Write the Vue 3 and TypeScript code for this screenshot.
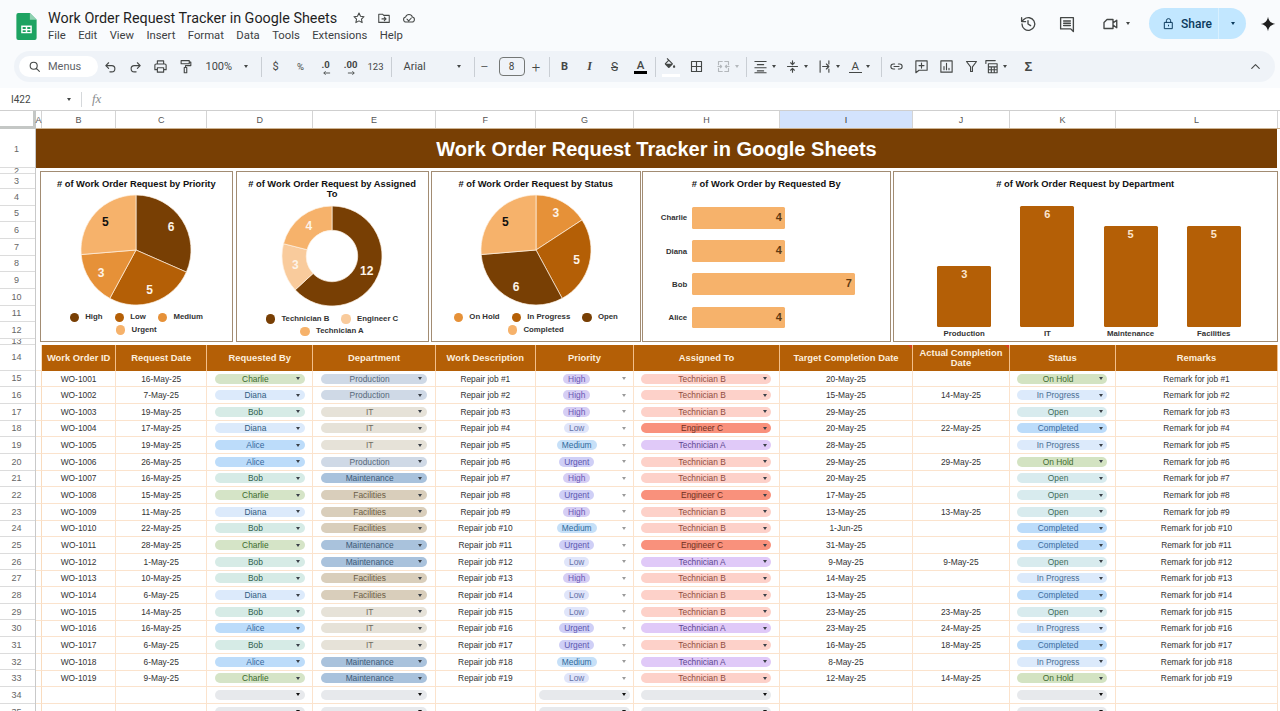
<script setup lang="ts">
interface Slice { d: string; color: string; x: number; y: number; v: number; tc: string }
interface Tool { kind: 'sep' | 'tb' | 'box'; cls?: string; d?: string; text?: string; tcls?: string; caret?: boolean; arrow?: string }

function slices(vals: number[], colors: string[], tcs: string[], r: number, inner = 0): Slice[] {
  const total = vals.reduce((a, b) => a + b, 0)
  const c = 57
  const pt = (rad: number, a: number) => `${(c + rad * Math.sin(a)).toFixed(2)} ${(c - rad * Math.cos(a)).toFixed(2)}`
  let acc = 0
  return vals.map((v, i) => {
    const a0 = (acc / total) * 2 * Math.PI
    acc += v
    const a1 = (acc / total) * 2 * Math.PI
    const large = a1 - a0 > Math.PI ? 1 : 0
    const d = inner
      ? `M${pt(r, a0)}A${r} ${r} 0 ${large} 1 ${pt(r, a1)}L${pt(inner, a1)}A${inner} ${inner} 0 ${large} 0 ${pt(inner, a0)}Z`
      : `M${c} ${c}L${pt(r, a0)}A${r} ${r} 0 ${large} 1 ${pt(r, a1)}Z`
    const mid = (a0 + a1) / 2
    const lr = inner ? (r + inner) / 2 : r * 0.76
    return { d, color: colors[i], tc: tcs[i], v, x: c + lr * Math.sin(mid), y: c - lr * Math.cos(mid) }
  })
}

const D3 = '#783f04', D2 = '#b45f06', D1 = '#e69138', L1 = '#f6b26b', L2 = '#f9cb9c'
const W = '#fdf3e8', K = '#111111'

const pies = [
  { title: '# of Work Order Request by Priority', cls: 'c1', sl: slices([6, 5, 3, 5], [D3, D2, D1, L1], [W, W, W, K], 55),
    legend: [['High', D3], ['Low', D2], ['Medium', D1], ['Urgent', L1]] },
  { title: '# of Work Order Request by Assigned To', cls: 'c2', sl: slices([12, 3, 4], [D3, L2, L1], [W, W, W], 50, 25.7),
    legend: [['Technician B', D3], ['Engineer C', L2], ['Technician A', L1]] },
  { title: '# of Work Order Request by Status', cls: 'c3', sl: slices([3, 5, 6, 5], [D1, D2, D3, L1], [W, W, W, K], 55),
    legend: [['On Hold', D1], ['In Progress', D2], ['Open', D3], ['Completed', L1]] }
]

const hbars = [['Charlie', 4], ['Diana', 4], ['Bob', 7], ['Alice', 4]] as [string, number][]
const vbars = [['Production', 3], ['IT', 6], ['Maintenance', 5], ['Facilities', 5]] as [string, number][]

const columns = ['A', 'B', 'C', 'D', 'E', 'F', 'G', 'H', 'I', 'J', 'K', 'L']
const headers = ['Work Order ID', 'Request Date', 'Requested By', 'Department', 'Work Description', 'Priority', 'Assigned To', 'Target Completion Date', 'Actual Completion Date', 'Status', 'Remarks']

const TB = 'Technician B', TA = 'Technician A', EC = 'Engineer C'
const raw: string[][] = [
  ['16-May-25', 'Charlie', 'Production', 'High', TB, '20-May-25', '', 'On Hold'],
  ['7-May-25', 'Diana', 'Production', 'High', TB, '15-May-25', '14-May-25', 'In Progress'],
  ['19-May-25', 'Bob', 'IT', 'High', TB, '29-May-25', '', 'Open'],
  ['17-May-25', 'Diana', 'IT', 'Low', EC, '20-May-25', '22-May-25', 'Completed'],
  ['19-May-25', 'Alice', 'IT', 'Medium', TA, '28-May-25', '', 'In Progress'],
  ['26-May-25', 'Alice', 'Production', 'Urgent', TB, '29-May-25', '29-May-25', 'On Hold'],
  ['16-May-25', 'Bob', 'Maintenance', 'High', TB, '20-May-25', '', 'Open'],
  ['15-May-25', 'Charlie', 'Facilities', 'Urgent', EC, '17-May-25', '', 'Open'],
  ['11-May-25', 'Diana', 'Facilities', 'High', TB, '13-May-25', '13-May-25', 'Open'],
  ['22-May-25', 'Bob', 'Facilities', 'Medium', TB, '1-Jun-25', '', 'Completed'],
  ['28-May-25', 'Charlie', 'Maintenance', 'Urgent', EC, '31-May-25', '', 'Completed'],
  ['1-May-25', 'Bob', 'Maintenance', 'Low', TA, '9-May-25', '9-May-25', 'Open'],
  ['10-May-25', 'Bob', 'Facilities', 'High', TB, '14-May-25', '', 'In Progress'],
  ['6-May-25', 'Diana', 'Facilities', 'Low', TB, '13-May-25', '', 'Completed'],
  ['14-May-25', 'Bob', 'IT', 'Low', TB, '23-May-25', '23-May-25', 'Open'],
  ['16-May-25', 'Alice', 'IT', 'Urgent', TA, '23-May-25', '24-May-25', 'In Progress'],
  ['6-May-25', 'Bob', 'IT', 'Urgent', TB, '16-May-25', '18-May-25', 'Completed'],
  ['6-May-25', 'Alice', 'Maintenance', 'Medium', TA, '8-May-25', '', 'In Progress'],
  ['9-May-25', 'Charlie', 'Maintenance', 'Low', TB, '12-May-25', '14-May-25', 'On Hold']
]
const rows = raw.map((r, i) => {
  const n = i + 1
  return { id: `WO-${1000 + n}`, date: r[0], by: r[1], dept: r[2], job: `Repair job #${n}`, pri: r[3], who: r[4], target: r[5], actual: r[6], status: r[7], remark: `Remark for job #${n}` }
})
const tone = (s: string) => 'p-' + s.toLowerCase().replace(/\s+/g, '-')

const rowLabels: [number, string][] = [[1, 'r1'], [2, 'r2'], [3, 'r3'], [4, ''], [5, ''], [6, ''], [7, ''], [8, ''], [9, ''], [10, ''], [11, ''], [12, ''], [13, 'r2'], [14, 'r14']]
for (let n = 15; n <= 35; n++) rowLabels.push([n, ''])

const P = {
  undo: 'M9 15 4.5 10.500 9 6M4.500 10.500H14a5 5 0 0 1 0 10h-3',
  redo: 'M15 15l4.500-4.500L15 6M19.500 10.500H10a5 5 0 0 0 0 10h3',
  print: 'M7 8V3h10v5M7 17H3v-7a2 2 0 0 1 2-2h14a2 2 0 0 1 2 2v7h-4M7 14h10v7H7z',
  paint: 'M5 2.500h13v5H5zM18 5h2.500v5.500H12v3M10 13.500h4V22h-4z',
  fill: 'M16.560 8.940 7.620 0 6.210 1.410l2.380 2.380-5.150 5.150c-.59.59-.59 1.540 0 2.120l5.500 5.500c.29.29.68.44 1.060.44s.77-.15 1.060-.44l5.500-5.500c.59-.58.59-1.530 0-2.120zM5.210 10 10 5.210 14.790 10H5.210zM19 11.500s-2 2.170-2 3.500c0 1.100.9 2 2 2s2-.9 2-2c0-1.330-2-3.500-2-3.500z',
  borders: 'M4 4h16v16H4zM12 4v16M4 12h16',
  merge: 'M4 9V4h6M14 4h6v5M4 15v5h6M14 20h6v-5M9 12H3M15 12h6M7 10l2 2-2 2M17 10l-2 2 2 2',
  align: 'M3 4h18M7 9h10M3 14h18M7 19h10M3 22h18',
  valign: 'M4 12h16M12 3v6M9 6l3 3 3-3M12 21v-6M9 18l3-3 3 3',
  wrap: 'M5 3v18M19 3v5M19 16v5M9 12h10M15 8l4 4-4 4',
  link: 'M9 8H7a4 4 0 0 0 0 8h2M15 8h2a4 4 0 0 1 0 8h-2M8 12h8',
  comment: 'M3 3h18v15H8l-5 4zM12 6.500v8M8 10.500h8',
  chart: 'M3 3h18v18H3zM8 17v-5M12 17V7M16 17v-2',
  filter: 'M4 4h16l-6.500 8.500V20h-3v-7.500z',
  table: 'M3 7V2.500h15M7 7.500h14V22H7zM7 12.500h14M7 17.200h14M11.700 12.500V22M16.400 12.500V22',
  up: 'M6 15l6-6 6 6',
  search: 'M10.500 4a6.500 6.500 0 1 0 0 13 6.500 6.500 0 0 0 0-13zM15.500 15.500 21 21',
  star: 'M12 3.500l2.600 5.600 6 .7-4.400 4.100 1.200 6-5.400-3-5.400 3 1.200-6-4.400-4.100 6-.7z',
  folder: 'M3 5.500h6.500l2 2H21v12H3zM8.500 13.500h7M12.500 10.500l3 3-3 3',
  cloud: 'M7 19a4.500 4.500 0 0 1-.7-8.900 6 6 0 0 1 11.400 0A4.500 4.500 0 0 1 17 19zM8.500 14l3 3 4.500-5',
  history: 'M4 12a8.500 8.500 0 1 0 2.800-6.300L3.800 8.500M3.500 3.500v5.300h5.300M12 7.500V12l3.500 2.200',
  thread: 'M3.500 3.500h17V22l-3.500-3.500H3.500zM7.500 8h9M7.500 11h9M7.500 14h9',
  video: 'M8 6h8v12H4V10zM16 10.500l5-3.500v10l-5-3.500z',
  lock: 'M8 10V7a4 4 0 0 1 8 0v3M5 10h14v11.500H5zM12 15v1.500',
  spark: 'M12 1c.9 6.300 4.700 10.100 11 11-6.300.9-10.100 4.700-11 11-.9-6.300-4.700-10.100-11-11 6.300-.9 10.100-4.700 11-11z'
}

const tools: Tool[] = [
  { kind: 'tb', d: P.undo }, { kind: 'tb', d: P.redo }, { kind: 'tb', d: P.print }, { kind: 'tb', d: P.paint },
  { kind: 'tb', cls: 'zoom', text: '100%', caret: true },
  { kind: 'sep', cls: 's1' },
  { kind: 'tb', text: '$', tcls: 'sym' }, { kind: 'tb', text: '%', tcls: 'sym small' },
  { kind: 'tb', text: '.0', tcls: 'sym tiny', arrow: 'M9 2H2M4 0 2 2l2 2' }, { kind: 'tb', text: '.00', tcls: 'sym tiny', arrow: 'M1 2h7M6 0l2 2-2 2' },
  { kind: 'tb', text: '123', tcls: 'sym small' },
  { kind: 'sep', cls: 's2' },
  { kind: 'tb', cls: 'font', text: 'Arial', caret: true },
  { kind: 'sep', cls: 's3' },
  { kind: 'tb', cls: 'w20', text: '−', tcls: 'pm' }, { kind: 'box', text: '8' }, { kind: 'tb', cls: 'w20', text: '+', tcls: 'pm' },
  { kind: 'sep', cls: 's4' },
  { kind: 'tb', text: 'B', tcls: 'fb' }, { kind: 'tb', text: 'I', tcls: 'fi' }, { kind: 'tb', text: 'S', tcls: 'fs' }, { kind: 'tb', text: 'A', tcls: 'fa' },
  { kind: 'sep', cls: 's5' },
  { kind: 'tb', cls: 'fillb', d: P.fill }, { kind: 'tb', cls: 'ml', d: P.borders },
  { kind: 'tb', cls: 'w36 dim', d: P.merge, caret: true },
  { kind: 'sep', cls: 's6' },
  { kind: 'tb', cls: 'w32', d: P.align, caret: true }, { kind: 'tb', cls: 'w32', d: P.valign, caret: true }, { kind: 'tb', cls: 'w32', d: P.wrap, caret: true },
  { kind: 'tb', cls: 'w32', text: 'A', tcls: 'ra', caret: true },
  { kind: 'sep', cls: 's7' },
  { kind: 'tb', d: P.link }, { kind: 'tb', d: P.comment }, { kind: 'tb', d: P.chart }, { kind: 'tb', d: P.filter },
  { kind: 'tb', cls: 'w32 wt', d: P.table, caret: true }, { kind: 'tb', text: 'Σ', tcls: 'sigma' }
]
const menus = ['File', 'Edit', 'View', 'Insert', 'Format', 'Data', 'Tools', 'Extensions', 'Help']
</script>

<template>
  <div class="app">
    <div class="chrome">
      <header class="top">
        <svg class="logo" viewBox="0 0 21 28">
          <path d="M0 2a2 2 0 0 1 2-2h12l7 7v19a2 2 0 0 1-2 2H2a2 2 0 0 1-2-2z" fill="#1ea362" />
          <path d="M14 0l7 7h-7z" fill="#8ed1b1" />
          <path d="M5 13h11v8H5z" fill="#fff" />
          <path d="M6.500 14.500h3.200v2h-3.200zM11.300 14.500h3.200v2h-3.200zM6.500 18h3.200v1.600h-3.200zM11.300 18h3.200v1.600h-3.200z" fill="#1ea362" />
        </svg>
        <div class="docinfo">
          <div class="docline">
            <span class="doctitle">Work Order Request Tracker in Google Sheets</span>
            <svg class="ic di" viewBox="0 0 24 24"><path :d="P.star" /></svg>
            <svg class="ic di" viewBox="0 0 24 24"><path :d="P.folder" /></svg>
            <svg class="ic di" viewBox="0 0 24 24"><path :d="P.cloud" /></svg>
          </div>
          <nav class="menus"><span v-for="m in menus" :key="m">{{ m }}</span></nav>
        </div>
        <div class="actions">
          <svg class="ic big hist" viewBox="0 0 24 24"><path :d="P.history" /></svg>
          <svg class="ic big thr" viewBox="0 0 24 24"><path :d="P.thread" /></svg>
          <svg class="ic big vid" viewBox="0 0 24 24"><path :d="P.video" /></svg>
          <i class="caret vcaret"></i>
          <div class="share">
            <div class="share-main">
              <svg class="ic lock" viewBox="0 0 24 24"><path :d="P.lock" /></svg>
              <span>Share</span>
            </div>
            <div class="share-drop"><i class="caret dk"></i></div>
          </div>
          <svg class="spark" viewBox="0 0 24 24"><path :d="P.spark" /></svg>
        </div>
      </header>

      <div class="toolbar">
        <div class="search">
          <svg class="ic sic" viewBox="0 0 24 24"><path :d="P.search" /></svg>
          <span>Menus</span>
        </div>
        <template v-for="(t, i) in tools" :key="i">
          <span v-if="t.kind === 'sep'" class="sep" :class="t.cls"></span>
          <span v-else-if="t.kind === 'box'" class="fsbox">{{ t.text }}</span>
          <span v-else class="tb" :class="t.cls">
            <svg v-if="t.d" class="ic" viewBox="0 0 24 24"><path :d="t.d" /></svg>
            <span v-if="t.text" class="tbt" :class="t.tcls">{{ t.text }}</span>
            <svg v-if="t.arrow" class="arrow" viewBox="0 0 10 4"><path :d="t.arrow" /></svg>
            <i v-if="t.caret" class="caret"></i>
          </span>
        </template>
        <svg class="ic chev" viewBox="0 0 24 24"><path :d="P.up" /></svg>
      </div>
    </div>

    <div class="formula">
      <span class="ref">I422</span>
      <i class="caret"></i>
      <span class="fsep"></span>
      <span class="fx">fx</span>
    </div>

    <div class="colhead">
      <div class="corner"></div>
      <div class="cols grid">
        <div v-for="c in columns" :key="c" class="ch" :class="{ sel: c === 'I' }">{{ c }}</div>
      </div>
    </div>

    <div class="sheet">
      <div class="rowhead">
        <div v-for="r in rowLabels" :key="r[0]" class="rl" :class="r[1]">{{ r[0] }}</div>
      </div>
      <div class="content">
        <div class="banner">Work Order Request Tracker in Google Sheets</div>
        <div class="charts">
          <section v-for="p in pies" :key="p.cls" class="chart" :class="p.cls">
            <h3 class="ctitle">{{ p.title }}</h3>
            <svg class="pie" viewBox="0 0 114 114">
              <path v-for="s in p.sl" :key="s.d" :d="s.d" :fill="s.color" stroke="#fdf0e2" stroke-width=".7" />
              <text v-for="s in p.sl" :key="'t' + s.d" class="plabel" :x="s.x" :y="s.y + 4" :fill="s.tc" text-anchor="middle">{{ s.v }}</text>
            </svg>
            <div class="legend">
              <span v-for="l in p.legend" :key="l[0]" class="li"><i class="dot" :style="{ background: l[1] }"></i>{{ l[0] }}</span>
            </div>
          </section>
          <section class="chart c4">
            <h3 class="ctitle">{{ '# of Work Order by Requested By' }}</h3>
            <div class="hlist">
              <div v-for="b in hbars" :key="b[0]" class="hrow">
                <span class="hname">{{ b[0] }}</span>
                <span class="hbar" :style="{ width: b[1] * 23.37 + 'px' }">{{ b[1] }}</span>
              </div>
            </div>
          </section>
          <section class="chart c5">
            <h3 class="ctitle">{{ '# of Work Order Request by Department' }}</h3>
            <div class="vlist">
              <div v-for="b in vbars" :key="b[0]" class="vcol">
                <span class="vbar" :style="{ height: b[1] * 20.07 + 'px' }">{{ b[1] }}</span>
                <span class="vname">{{ b[0] }}</span>
              </div>
            </div>
          </section>
        </div>
        <div class="spacer"></div>

        <div class="grid thead">
          <div class="ca"></div>
          <div v-for="h in headers" :key="h" class="th">
            <span>{{ h }}</span>
            <i v-if="h.includes('Completion')" class="note"></i>
          </div>
        </div>

        <div v-for="r in rows" :key="r.id" class="grid tr">
          <div class="ca"></div>
          <div class="td">{{ r.id }}</div>
          <div class="td">{{ r.date }}</div>
          <div class="td"><div class="pill" :class="tone(r.by)"><span>{{ r.by }}</span><i class="caret"></i></div></div>
          <div class="td"><div class="pill" :class="tone(r.dept)"><span>{{ r.dept }}</span><i class="caret"></i></div></div>
          <div class="td">{{ r.job }}</div>
          <div class="td tdpri"><span class="pwrap"><span class="chip" :class="tone(r.pri)">{{ r.pri }}</span></span><i class="caret gray"></i></div>
          <div class="td"><div class="pill" :class="tone(r.who)"><span>{{ r.who }}</span><i class="caret"></i></div></div>
          <div class="td">{{ r.target }}</div>
          <div class="td">{{ r.actual }}</div>
          <div class="td"><div class="pill" :class="tone(r.status)"><span>{{ r.status }}</span><i class="caret"></i></div></div>
          <div class="td">{{ r.remark }}</div>
        </div>

        <div v-for="n in 2" :key="'e' + n" class="grid tr">
          <div class="ca"></div>
          <div class="td"></div>
          <div class="td"></div>
          <div class="td"><div class="pill blank"><span></span><i class="caret"></i></div></div>
          <div class="td"><div class="pill blank"><span></span><i class="caret"></i></div></div>
          <div class="td"></div>
          <div class="td"><div class="pill blank wide"><span></span><i class="caret"></i></div></div>
          <div class="td"><div class="pill blank"><span></span><i class="caret"></i></div></div>
          <div class="td"></div>
          <div class="td"></div>
          <div class="td"><div class="pill blank"><span></span><i class="caret"></i></div></div>
          <div class="td"></div>
        </div>
      </div>
    </div>
  </div>
</template>

<style>
html, body { margin: 0; padding: 0; background: #fff; overflow: hidden; }
</style>

<style scoped>
.app { width: 1280px; height: 711px; overflow: hidden; background: #fff; font-family: "Liberation Sans", Arial, sans-serif; color: #333; }
.ic { fill: none; stroke: #444746; stroke-width: 1.800; stroke-linejoin: round; stroke-linecap: round; width: 15px; height: 15px; flex: none; }
.caret { display: block; flex: none; width: 0; height: 0; border-left: 2.800px solid transparent; border-right: 2.800px solid transparent; border-top: 3.200px solid #444746; }

/* top */
.chrome { height: 88px; background: #f9fbfd; }
.top { height: 51px; display: flex; align-items: flex-start; }
.logo { width: 21px; height: 27px; margin: 12.500px 0 0 16px; flex: none; }
.docinfo { margin-left: 11px; padding-top: 9px; }
.docline { display: flex; align-items: center; height: 18px; }
.doctitle { font: 400 14.350px Roboto, sans-serif; color: #1f1f1f; width: 304px; white-space: nowrap; }
.di { width: 14px; height: 14px; margin-right: 11px; stroke-width: 1.800; }
.menus { display: flex; gap: 12.400px; margin-top: 1px; font: 400 11.300px/16px Roboto, sans-serif; color: #3c4043; }
.actions { margin-left: auto; display: flex; align-items: center; height: 31px; margin-top: 8px; }
.big { width: 18px; height: 18px; }
.thr { margin-left: 20.500px; }
.vid { margin-left: 25.500px; }
.vcaret { margin-left: 7px; }
.share { width: 97px; height: 31px; margin-left: 19px; background: #c2e7ff; border-radius: 16px; display: flex; }
.share-main { width: 70px; display: flex; align-items: center; padding-left: 13px; border-right: 1px solid #d8f0ff; box-sizing: border-box; font: 500 12px Roboto, sans-serif; color: #0b3a5c; gap: 6px; }
.lock { width: 13px; height: 13px; stroke: #0b3a5c; }
.share-drop { flex: 1; display: flex; align-items: center; justify-content: center; }
.dk { border-top-color: #0b3a5c; }
.spark { width: 16px; height: 16px; fill: #1f1f1f; margin: 0 4px 0 14px; }

/* toolbar */
.toolbar { height: 31px; margin: 0 5px 0 14px; background: #eff3f8; border-radius: 16px; display: flex; align-items: center; padding-left: 5px; box-sizing: border-box; }
.search { width: 79px; height: 21px; background: #fff; border-radius: 11px; display: flex; align-items: center; font: 400 11px Roboto, sans-serif; color: #5f6368; flex: none; box-sizing: border-box; padding-left: 9px; gap: 7px; }
.sic { width: 13px; height: 13px; stroke-width: 2; }
.tb { width: 25px; height: 22px; flex: none; display: flex; align-items: center; justify-content: center; position: relative; }
.tbt { font: 400 11px Roboto, sans-serif; color: #444746; }
.zoom { width: 56.500px; justify-content: flex-start; padding-left: 7.500px; box-sizing: border-box; gap: 11.500px; }
.font { width: 80px; justify-content: space-between; padding: 0 10.500px 0 12px; box-sizing: border-box; }
.w20 { width: 20px; }
.w32 { width: 32px; gap: 4px; justify-content: flex-start; padding-left: 4px; box-sizing: border-box; }
.wt { margin: 0 4px 0 -3.500px; }
.w36 { width: 36px; gap: 4px; }
.dim .ic { stroke: #b4b8bc; }
.dim .caret { border-top-color: #b4b8bc; }
.ml { margin-left: 1.500px; }
.fillb .ic { fill: #444746; stroke: none; transform: translateY(-2px); width: 14px; height: 14px; }
.fillb::after { content: ""; position: absolute; left: 4px; right: 3px; bottom: 1px; height: 3px; background: #fff; }
.sep { width: 1px; height: 20px; background: #c9ced4; flex: none; }
.s1 { margin: 0 1.500px 0 6px; }
.s2 { margin: 0 0 0 2.500px; }
.s3 { margin: 0 0 0 2px; }
.s4 { margin: 0 2px 0 3px; }
.s5 { margin: 0 1.500px 0 3px; }
.s6 { margin: 0 2px 0 1px; }
.s7 { margin: 0 1.500px 0 4px; }
.sym { font-size: 11px; }
.small { font-size: 9.500px; }
.tiny { font-size: 9.500px; font-weight: 700; margin-top: -5px; }
.arrow { position: absolute; left: 9px; bottom: 3px; width: 9px; height: 4px; fill: none; stroke: #444746; stroke-width: 1; }
.pm { font-size: 15px; font-weight: 300; }
.fsbox { width: 26px; height: 19px; border: 1px solid #747775; border-radius: 4px; box-sizing: border-box; flex: none; margin: 0 1.500px 0 4px; display: flex; align-items: center; justify-content: center; font: 400 10px Roboto, sans-serif; color: #444746; }
.fb { font-weight: 700; font-size: 11px; }
.fi { font: italic 700 12px "Liberation Serif", serif; }
.fs { text-decoration: line-through; font-size: 12px; }
.fa { font-weight: 500; font-size: 11.500px; border-bottom: 3px solid #000; line-height: 12px; padding: 0 2.500px; margin-left: 2px; }
.ra { font-size: 11.500px; border-bottom: 1.500px solid #444746; line-height: 12px; padding: 0 2.500px; }
.sigma { font: 700 13px "Liberation Sans", sans-serif; }
.chev { margin-left: auto; margin-right: 12px; }

/* formula */
.formula { height: 22px; background: #fff; display: flex; align-items: center; box-sizing: border-box; font: 400 10px Roboto, sans-serif; color: #444746; }
.ref { margin-left: 11px; width: 56px; }
.fsep { width: 1px; height: 15px; background: #d5d8db; margin-left: 10px; }
.fx { font: italic 13px "Liberation Serif", serif; color: #8a8d90; margin-left: 10px; }

/* grid */
.colhead { display: flex; border-top: 1px solid #cfcfcf; box-sizing: border-box; height: 19px; }
.corner { width: 36px; flex: none; box-sizing: border-box; background: #fff; border-right: 3px solid #c4c7c5; border-bottom: 3px solid #c4c7c5; }
.cols { flex: 1; border-bottom: 1px solid #cdb493; }
.grid { display: grid; grid-template-columns: 6px 74.200px 91px 106.200px 122.300px 100.300px 98px 146px 133px 97px 106px 162px; }
.ch { display: flex; align-items: center; justify-content: center; font-size: 9px; color: #555; border-right: 1px solid #d4d4d4; box-sizing: border-box; }
.ch.sel { background: #d3e3fd; color: #333; }
.sheet { display: flex; }
.rowhead { width: 36px; flex: none; border-right: 1px solid #c9c9c9; box-sizing: border-box; }
.rl { height: 16.670px; font-size: 9px; color: #666; display: flex; align-items: center; justify-content: center; border-bottom: 1px solid #dcdcdc; box-sizing: border-box; overflow: hidden; padding-right: 2px; }
.r1 { height: 39px; padding-top: 1px; }
.r2 { height: 6px; }
.r3 { height: 15px; }
.r14 { height: 25.700px; padding-bottom: 1px; }
.content { flex: 1; min-width: 0; }
.banner { height: 39px; background: #783f04; color: #fff; font-weight: 700; font-size: 20.050px; display: flex; align-items: center; justify-content: center; width: 1241px; box-sizing: border-box; padding-top: 2px; }

/* charts */
.charts { display: flex; height: 171px; margin: 3px 0 0 4px; }
.chart { background: #fff; border: 1.500px solid #a28c73; box-sizing: border-box; display: flex; flex-direction: column; align-items: center; flex: none; }
.c1 { width: 192.500px; margin-right: 3px; }
.c2 { width: 193px; margin-right: 2.500px; }
.c3 { width: 209.500px; margin-right: 1.500px; }
.c4 { width: 248.500px; margin-right: 2.500px; }
.c5 { width: 384.500px; }
.ctitle { margin: 0; padding: 8.400px 6px 0; font-size: 9.350px; line-height: 9.700px; font-weight: 700; color: #111; text-align: center; }
.pie { width: 114px; height: 114px; margin-top: 3.400px; flex: none; }
.c2 .pie { margin-top: -1px; }
.plabel { font: 700 12px "Liberation Sans", sans-serif; }
.legend { margin-top: auto; padding-bottom: 4.600px; display: flex; flex-wrap: wrap; justify-content: center; max-width: 176px; column-gap: 12px; font-size: 7.800px; font-weight: 700; line-height: 12.600px; color: #333; }
.li { display: flex; align-items: center; white-space: nowrap; }
.dot { width: 9.300px; height: 9.300px; border-radius: 50%; margin-right: 6.400px; flex: none; }
.hlist { margin-top: 16.800px; width: 100%; display: flex; flex-direction: column; gap: 11.600px; }
.hrow { display: flex; align-items: center; height: 21.700px; }
.hname { width: 44.200px; text-align: right; font-size: 7.800px; font-weight: 700; margin-right: 4.600px; color: #333; }
.hbar { height: 100%; background: #f6b26b; border-radius: 1.500px; text-align: right; padding-right: 3.500px; box-sizing: border-box; font-size: 11px; font-weight: 700; line-height: 21px; color: #5e3a12; }
.vlist { display: flex; align-items: flex-end; gap: 29.200px; align-self: flex-start; padding-left: 43.200px; margin-top: auto; padding-bottom: 1.500px; }
.vcol { width: 54px; display: flex; flex-direction: column; align-items: center; }
.vbar { width: 54px; background: #b45f06; border-radius: 1.500px; text-align: center; font-size: 11px; font-weight: 700; line-height: 12px; padding-top: 2px; box-sizing: border-box; color: #fce5cd; }
.vname { font-size: 7.800px; font-weight: 700; line-height: 12px; margin-top: 1px; white-space: nowrap; color: #333; }
.spacer { height: 3px; }

/* table */
.ca { border-right: 1px solid #f9dcbf; border-bottom: 1px solid #fbe5cf; box-sizing: border-box; }
.thead { height: 25.700px; }
.th { background: #b45f06; color: #fdeedd; font-size: 9.400px; font-weight: 700; line-height: 9.600px; text-align: center; display: flex; align-items: center; justify-content: center; border-right: 1px solid #f3bf8a; box-sizing: border-box; padding: 0 2px; position: relative; }
.note { position: absolute; top: 0; right: 0; border-top: 4px solid #d8401f; border-left: 4px solid transparent; }
.tr { height: 16.670px; }
.td { display: flex; align-items: center; justify-content: center; font-size: 8.400px; color: #333; border-right: 1px solid #fbe3cd; border-bottom: 1px solid #fbe3cd; box-sizing: border-box; min-width: 0; white-space: nowrap; }
.pill { flex: 1; height: 10px; margin: 0 7.500px; border-radius: 5px; display: flex; align-items: center; line-height: 10px; }
.pill span { flex: 1; text-align: center; }
.pill .caret { margin-right: 4.800px; border-top-color: #3a4048; }
.blank { background: #e7e9ec; color: #111; }
.pill.blank .caret { border-top-color: #111; }
.wide { margin: 0 2.500px 0 3.500px; }
.tdpri { justify-content: flex-start; }
.pwrap { flex: 1; text-align: center; padding-right: 5px; }
.chip { display: inline-block; height: 10px; line-height: 10px; border-radius: 5px; padding: 0 5px; }
.gray { border-top-color: #9a9a9a; margin-right: 6.500px; }

.p-charlie { background: #d5e4c7; color: #3b6b2b; }
.p-diana { background: #dceafb; color: #2f5a80; }
.p-bob { background: #d6ebe6; color: #2f5f4e; }
.p-alice { background: #bcdcfa; color: #36689c; }
.p-production { background: #cfd9e6; color: #56687b; }
.p-it { background: #e6e2d8; color: #6d6b60; }
.p-maintenance { background: #a9c2dc; color: #3c5a78; }
.p-facilities { background: #d9cebb; color: #6b5d45; }
.p-high { background: #d6cef4; color: #6b57b5; }
.p-low { background: #e0e5fa; color: #6672a8; }
.p-medium { background: #c6e0f8; color: #2f6a9c; }
.p-urgent { background: #cfcff6; color: #5c56b0; }
.p-technician-b { background: #fdd1c9; color: #8f4c3e; }
.p-engineer-c { background: #f9917c; color: #6e3022; }
.p-technician-a { background: #e0c9f8; color: #5c4690; }
.p-on-hold { background: #d3e3c2; color: #3f6b2f; }
.p-in-progress { background: #dceafb; color: #4a6f95; }
.p-open { background: #d8ebee; color: #3d6b5a; }
.p-completed { background: #bcdcfa; color: #3b6ca0; }
</style>
